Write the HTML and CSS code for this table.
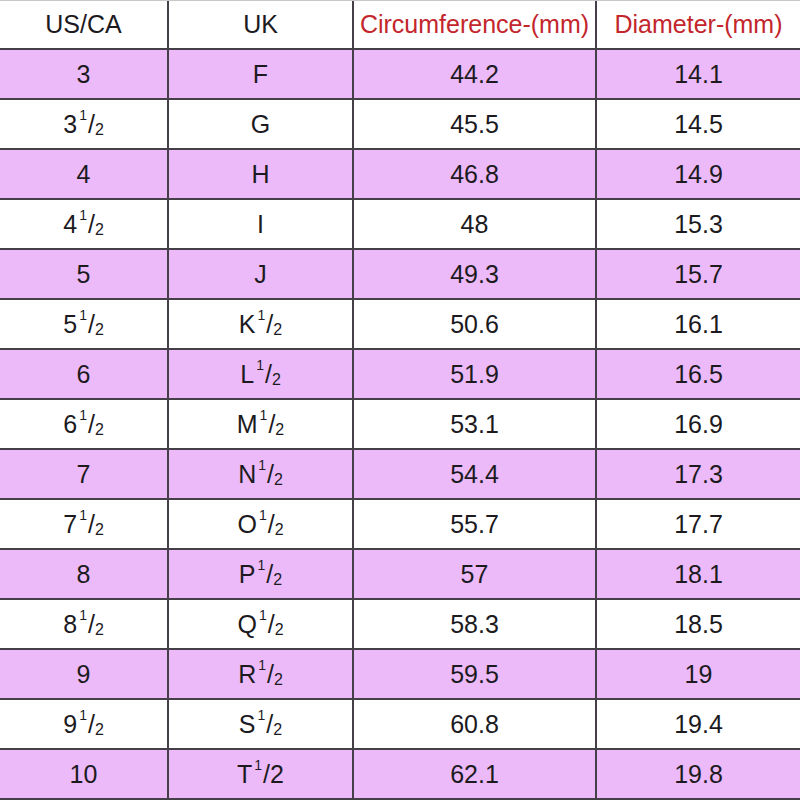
FILE: index.html
```html
<!DOCTYPE html>
<html>
<head>
<meta charset="utf-8">
<link rel="stylesheet" href="styles.css">
</head>
<body>
<div class="table">
  <div class="row head">
    <div class="cell">US/CA</div>
    <div class="cell">UK</div>
    <div class="cell red">Circumference-(mm)</div>
    <div class="cell red">Diameter-(mm)</div>
  </div>
  <div class="row alt"><div class="cell">3</div><div class="cell">F</div><div class="cell">44.2</div><div class="cell">14.1</div></div>
  <div class="row"><div class="cell">3<span class="sup">1</span>/<span class="sub">2</span></div><div class="cell">G</div><div class="cell">45.5</div><div class="cell">14.5</div></div>
  <div class="row alt"><div class="cell">4</div><div class="cell">H</div><div class="cell">46.8</div><div class="cell">14.9</div></div>
  <div class="row"><div class="cell">4<span class="sup">1</span>/<span class="sub">2</span></div><div class="cell">I</div><div class="cell">48</div><div class="cell">15.3</div></div>
  <div class="row alt"><div class="cell">5</div><div class="cell">J</div><div class="cell">49.3</div><div class="cell">15.7</div></div>
  <div class="row"><div class="cell">5<span class="sup">1</span>/<span class="sub">2</span></div><div class="cell">K<span class="sup">1</span>/<span class="sub">2</span></div><div class="cell">50.6</div><div class="cell">16.1</div></div>
  <div class="row alt"><div class="cell">6</div><div class="cell">L<span class="sup">1</span>/<span class="sub">2</span></div><div class="cell">51.9</div><div class="cell">16.5</div></div>
  <div class="row"><div class="cell">6<span class="sup">1</span>/<span class="sub">2</span></div><div class="cell">M<span class="sup">1</span>/<span class="sub">2</span></div><div class="cell">53.1</div><div class="cell">16.9</div></div>
  <div class="row alt"><div class="cell">7</div><div class="cell">N<span class="sup">1</span>/<span class="sub">2</span></div><div class="cell">54.4</div><div class="cell">17.3</div></div>
  <div class="row"><div class="cell">7<span class="sup">1</span>/<span class="sub">2</span></div><div class="cell">O<span class="sup">1</span>/<span class="sub">2</span></div><div class="cell">55.7</div><div class="cell">17.7</div></div>
  <div class="row alt"><div class="cell">8</div><div class="cell">P<span class="sup">1</span>/<span class="sub">2</span></div><div class="cell">57</div><div class="cell">18.1</div></div>
  <div class="row"><div class="cell">8<span class="sup">1</span>/<span class="sub">2</span></div><div class="cell">Q<span class="sup">1</span>/<span class="sub">2</span></div><div class="cell">58.3</div><div class="cell">18.5</div></div>
  <div class="row alt"><div class="cell">9</div><div class="cell">R<span class="sup">1</span>/<span class="sub">2</span></div><div class="cell">59.5</div><div class="cell">19</div></div>
  <div class="row"><div class="cell">9<span class="sup">1</span>/<span class="sub">2</span></div><div class="cell">S<span class="sup">1</span>/<span class="sub">2</span></div><div class="cell">60.8</div><div class="cell">19.4</div></div>
  <div class="row alt"><div class="cell">10</div><div class="cell">T<span class="sup">1</span>/2</div><div class="cell">62.1</div><div class="cell">19.8</div></div>
</div>
</body>
</html>
```

FILE: styles.css
```css
html, body {
  margin: 0;
  padding: 0;
  background: #ffffff;
}
.table {
  width: 800px;
  border-top: 1px solid #c8c8c8;
  font-family: "Liberation Sans", Arial, sans-serif;
  font-size: 25px;
  color: #1c1a1e;
}
.row {
  display: grid;
  grid-template-columns: 169px 185px 243px 1fr;
  height: 50px;
  box-sizing: border-box;
  border-bottom: 2px solid #453f48;
  background: #ffffff;
}
.row.head {
  height: 49px;
}
.row.alt {
  background: #ecbaf8;
}
.cell {
  display: flex;
  align-items: center;
  justify-content: center;
  border-right: 2px solid #453f48;
  line-height: 1;
  white-space: nowrap;
}
.cell:last-child {
  border-right: none;
}
.red {
  color: #c3262c;
}
.sup {
  font-size: 14px;
  position: relative;
  top: -9px;
  margin: 0 1px 0 2px;
}
.sub {
  font-size: 16px;
  position: relative;
  top: 6px;
}
```
